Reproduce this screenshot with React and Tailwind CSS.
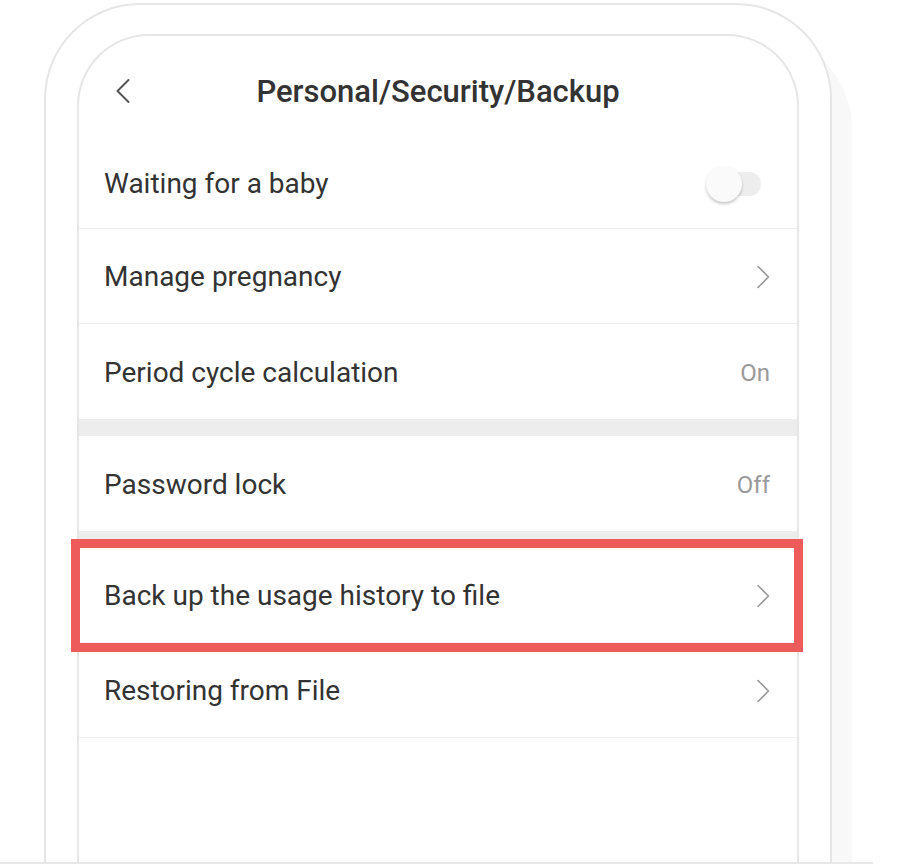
import React from 'react';

const Chevron = () => (
  <svg width="14" height="24" viewBox="0 0 14 24" fill="none" className="shrink-0">
    <path d="M2 1.5 L12.5 12 L2 22.5" stroke="#9a9a9a" strokeWidth="1.6" strokeLinecap="round" strokeLinejoin="round" />
  </svg>
);

const Toggle = () => (
  <div className="relative w-[56px] h-[36px] flex items-center">
    <div className="ml-[5px] w-[50px] h-[24px] rounded-full bg-[#ededed]" />
    <div className="absolute left-0 top-0 w-[36px] h-[36px] rounded-full bg-[#fafafa] shadow-[0_2px_3px_rgba(0,0,0,0.22)]" />
  </div>
);

function Row({ label, right, border = true, highlight = false, top = 'pt-[2px]' }) {
  return (
    <div className={`relative h-[95px] flex items-center justify-between pl-[25px] pr-[27px] ${top} ${border ? 'border-b border-[#efefef]' : ''}`}>
      <span className="text-[28px] text-[#333333]">{label}</span>
      {right}
      {highlight && (
        <div className="absolute -left-[8px] -right-[6px] -top-[9px] -bottom-[10px] border-[9px] border-[#ee5b5b] z-10" />
      )}
    </div>
  );
}

const Value = ({ children }) => <span className="text-[24px] text-[#9a9a9a]">{children}</span>;

export default function App() {
  return (
    <div className="w-[906px] h-[864px] overflow-hidden bg-white font-['Roboto',sans-serif]">
      <div className="ml-[44px] mt-[3px] w-[788px] h-[859px] border-2 border-b-0 border-[#e6e6e6] rounded-t-[96px] shadow-[20px_30px_0_#f8f8f8] bg-white px-[31px] pt-[29px]">
        <div className="h-full border-2 border-b-0 border-[#e6e6e6] rounded-t-[72px] bg-white">
          {/* header */}
          <div className="h-[98px] pt-[32px]">
            <div className="relative h-12 flex items-center justify-center">
              <svg width="16" height="26" viewBox="0 0 16 26" fill="none" className="absolute left-[36px] top-[10px]">
                <path d="M13.5 2 L2.5 13 L13.5 24" stroke="#555555" strokeWidth="2" strokeLinecap="round" strokeLinejoin="round" />
              </svg>
              <h1 className="text-[31px] font-medium text-[#333333]">Personal/Security/Backup</h1>
            </div>
          </div>

          <Row label="Waiting for a baby" right={<div className="mr-[8px]"><Toggle /></div>} top="pt-[6px]" />
          <Row label="Manage pregnancy" right={<Chevron />} />
          <Row label="Period cycle calculation" right={<Value>On</Value>} border={false} />
          <div className="h-[17px] bg-[#ededed]" />
          <Row label="Password lock" right={<Value>Off</Value>} border={false} />
          <div className="h-[17px] bg-[#ededed]" />
          <Row label="Back up the usage history to file" right={<Chevron />} highlight />
          <Row label="Restoring from File" right={<Chevron />} />
        </div>
      </div>
      <div className="h-[2px] w-[873px] bg-[#e8e8e8]" />
    </div>
  );
}
